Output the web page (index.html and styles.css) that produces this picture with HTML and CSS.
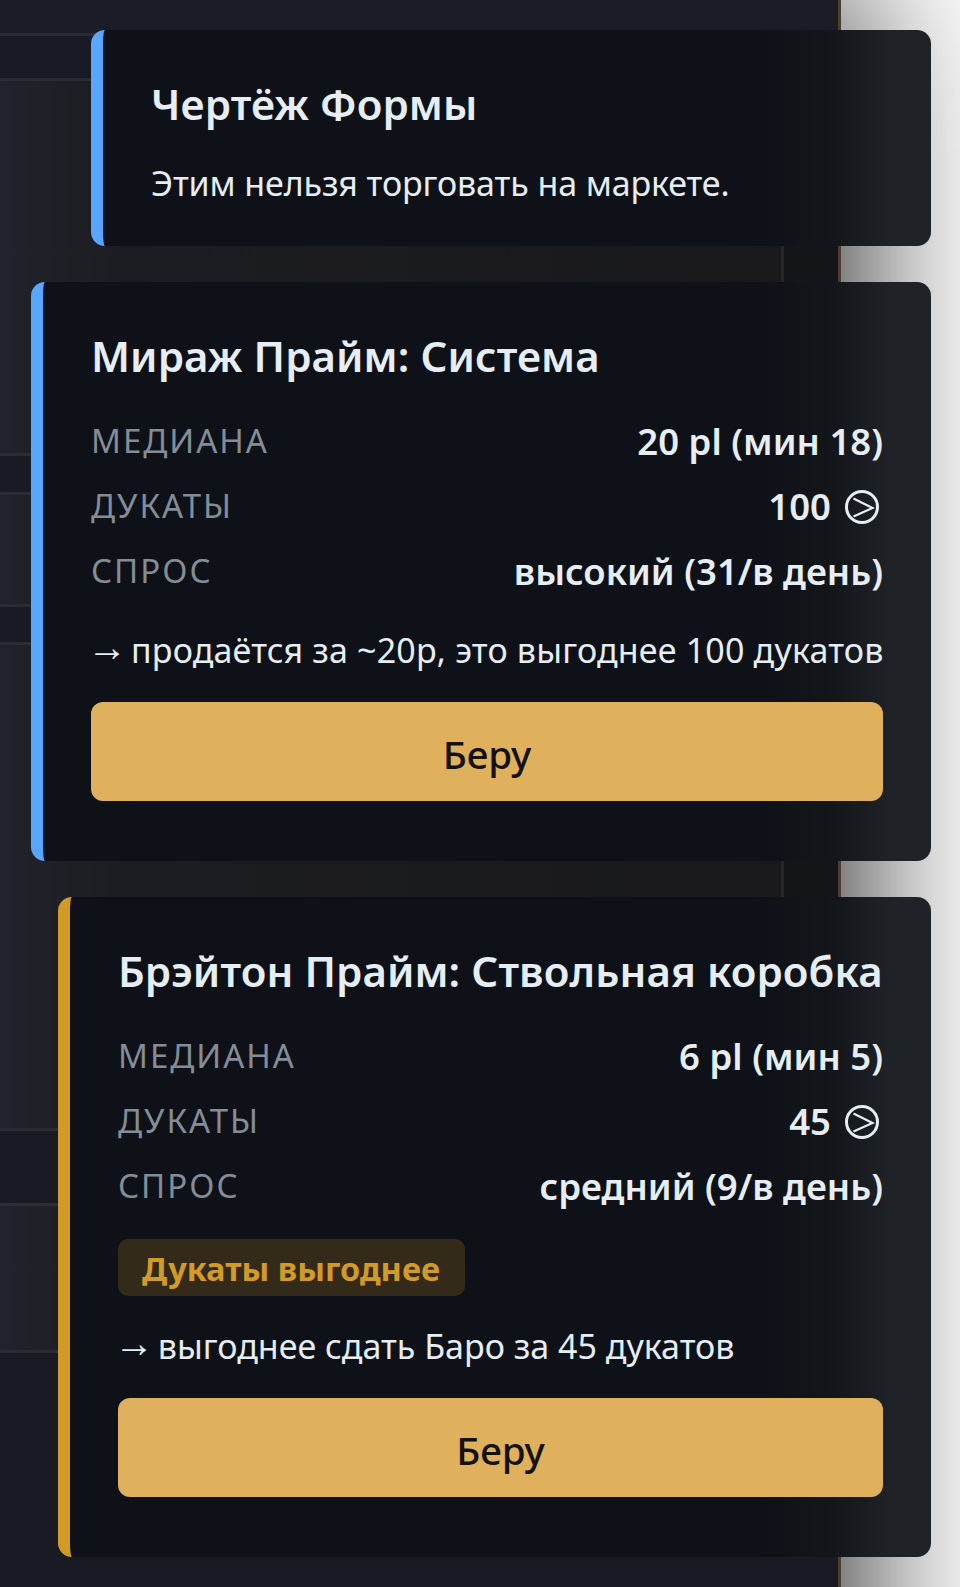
FILE: index.html
```html
<!DOCTYPE html>
<html lang="ru">
<head>
<meta charset="utf-8">
<title>Карточки</title>
<link rel="stylesheet" href="styles.css">
</head>
<body>
<div class="page">
  <div class="backdrop" aria-hidden="true">
    <div class="band h33"></div>
    <div class="band h42 blue"></div>
    <div class="band h372"></div>
    <div class="band h36 blue"></div>
    <div class="band h109"></div>
    <div class="band h35 blue"></div>
    <div class="band h483"></div>
    <div class="band h72 blue"></div>
    <div class="band h144"></div>
    <div class="band last"></div>
    <div class="vline"></div>
  </div>
  <main class="stack">
    <section class="card info w-small">
      <h2 class="title">Чертёж Формы</h2>
      <p class="note lone">Этим нельзя торговать на маркете.</p>
    </section>
    <section class="card info w-wide">
      <h2 class="title">Мираж Прайм: Система</h2>
      <div class="rows">
        <div class="row"><span class="label">Медиана</span><span class="value">20 pl (мин 18)</span></div>
        <div class="row"><span class="label">Дукаты</span><span class="value">100 <svg class="ducat" viewBox="0 0 34 34"><circle cx="17" cy="17" r="15.500"/><path class="chev" d="M8.500 8.500 27.500 18 8.500 26.500"/></svg></span></div>
        <div class="row"><span class="label">Спрос</span><span class="value">высокий (31/в день)</span></div>
      </div>
      <p class="note roomy"><span class="arrow">→</span> продаётся за ~20р, это выгоднее 100 дукатов</p>
      <button class="take">Беру</button>
    </section>
    <section class="card warn w-mid">
      <h2 class="title">Брэйтон Прайм: Ствольная коробка</h2>
      <div class="rows">
        <div class="row"><span class="label">Медиана</span><span class="value">6 pl (мин 5)</span></div>
        <div class="row"><span class="label">Дукаты</span><span class="value">45 <svg class="ducat" viewBox="0 0 34 34"><circle cx="17" cy="17" r="15.500"/><path class="chev" d="M8.500 8.500 27.500 18 8.500 26.500"/></svg></span></div>
        <div class="row"><span class="label">Спрос</span><span class="value">средний (9/в день)</span></div>
      </div>
      <span class="tag">Дукаты выгоднее</span>
      <p class="note after-tag"><span class="arrow">→</span> выгоднее сдать Баро за 45 дукатов</p>
      <button class="take">Беру</button>
    </section>
  </main>
</div>
</body>
</html>
```
FILE: styles.css
```css
* { box-sizing: border-box; }
html, body { margin: 0; padding: 0; background: #fff; }
body { font-family: "Noto Sans", "Open Sans", sans-serif; }
.page { position: relative; width: 960px; height: 1587px; overflow: hidden; background: #fff; }

.backdrop {
  position: absolute; left: 0; top: 0; bottom: -200px; width: 841px;
  display: flex; flex-direction: column;
  border-right: 3px solid #4a3f2e;
  background: linear-gradient(90deg, #20232b 0, #1c1d22 120px, #19191c 780px, #141518 784px);
  box-shadow: 0 0 160px 15px rgba(0,0,0,.85);
}
.band { border-bottom: 3px solid #2a2c33; flex: none; }
.blue { background: #181b23; }
.h33 { height: 36px; background: #1a1d26; }
.h42 { height: 45px; }
.h372 { height: 375px; }
.h36 { height: 39px; }
.h109 { height: 112px; }
.h35 { height: 38px; }
.h483 { height: 486px; }
.h72 { height: 75px; }
.h144 { height: 147px; }
.last { flex: 1; border-bottom: 0; background: #181b23; }
.vline { position: absolute; left: 781px; top: 100px; height: 1300px; width: 3px; background: #25262b; }

.stack {
  position: relative; display: flex; flex-direction: column; align-items: flex-end; gap: 36px;
  padding: 30px 29px 0 0;
}
.card {
  padding: 48px 48px 60px; border-left: 12px solid #58a6ff; border-radius: 14px;
  background: linear-gradient(90deg, #0e1218 0, #0e1218 calc(100% - 170px), #13161a calc(100% - 95px), #1f2227 calc(100% - 40px));
}
.w-small { width: 840px; height: 216px; }
.w-wide { width: 900px; height: 579px; }
.w-mid { width: 873px; height: 660px; }
.warn { border-left-color: #d19b26; }

.title { margin: 0; font-size: 42px; line-height: 52px; font-weight: 600; letter-spacing: .1px; color: #e6edf3; white-space: nowrap; }
.rows { margin-top: 30px; display: flex; flex-direction: column; gap: 8px; }
.row { display: flex; justify-content: space-between; align-items: center; height: 57px; }
.label { font-size: 33px; letter-spacing: 2px; text-transform: uppercase; color: #848d97; }
.value { font-size: 36.500px; font-weight: 600; color: #e6edf3; display: inline-flex; align-items: center; gap: 14px; white-space: nowrap; }
.ducat { width: 34px; height: 34px; margin-right: 4px; margin-top: 3px; fill: none; stroke: #e6edf3; stroke-width: 3; }
.chev { stroke-width: 2.200; }
.note { margin: 27px 0 0; font-size: 34px; line-height: 48px; color: #e6edf3; white-space: nowrap; }
.arrow { display: inline-block; width: 35px; margin-left: -4px; font-family: "Liberation Sans", sans-serif; font-size: 40px; line-height: 40px; letter-spacing: -8px; position: relative; top: -2px; }
.note.lone { margin-top: 29px; letter-spacing: -.12px; }
.note.roomy { letter-spacing: .18px; }
.note.after-tag { margin-top: 26px; }
.tag { display: inline-block; margin-top: 25px; height: 57px; padding: 0 25px 0 24px; line-height: 59px; border-radius: 10px; background: #332a1a; color: #d19b26; font-size: 32.500px; font-weight: 700; }
.take { display: block; width: 100%; height: 99px; margin-top: 28px; padding: 4px 0 0; border: 0; border-radius: 12px; background: #dfb15c; color: #14110a; font-family: inherit; font-size: 38.500px; font-weight: 500; }
```
